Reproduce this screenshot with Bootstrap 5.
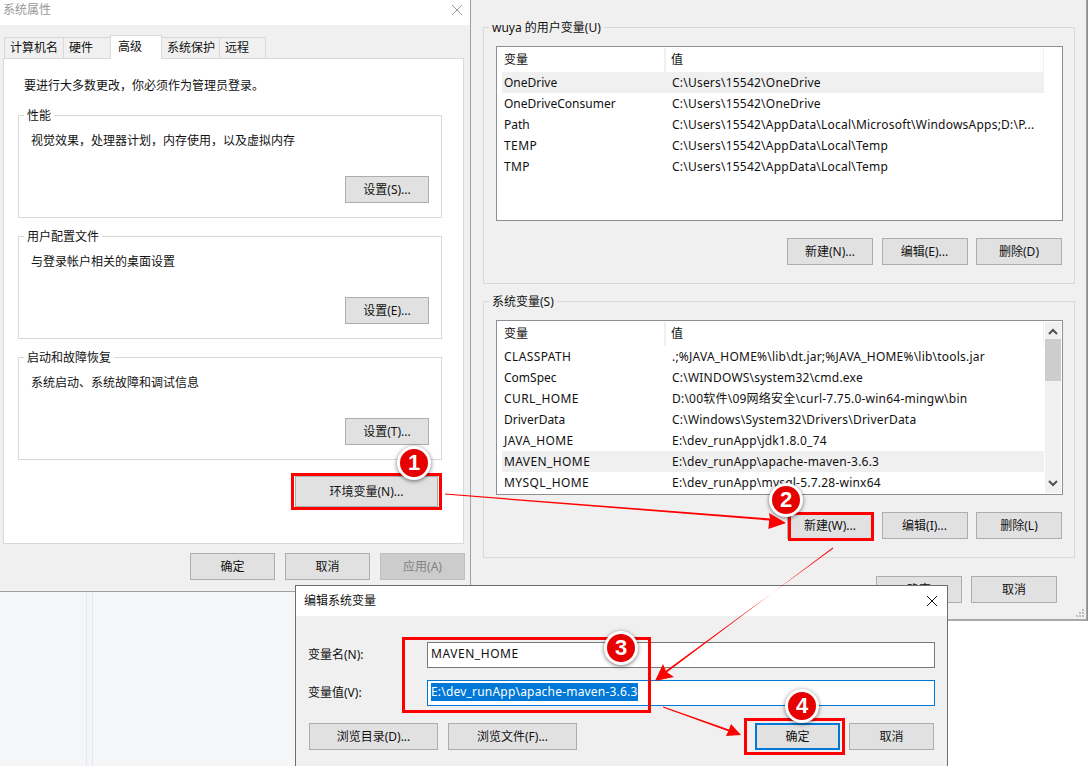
<!DOCTYPE html>
<html lang="zh-CN">
<head>
<meta charset="utf-8">
<title>环境变量</title>
<link href="https://cdn.jsdelivr.net/npm/bootstrap@5.3.0/dist/css/bootstrap.min.css" rel="stylesheet">
<style>
html,body{margin:0;height:766px;overflow:hidden;background:#fff}
body{font-family:"Noto Sans","Noto Sans CJK SC",sans-serif;font-size:12px;line-height:16px;color:#111;position:relative;width:1088px}
.backdrop{position:absolute;left:0;top:591px;width:296px;height:175px;background:#f5f6f8;display:flex}
.backdrop i{display:block;margin-left:86px;width:7px;height:100%;border-left:1px solid #e6e8eb;border-right:1px solid #e6e8eb}
.edge-strip{position:absolute;left:1087px;top:0;width:1px;height:621px;background:#8d8f92}
.win{position:absolute;background:#f0f0f0;display:flex;flex-direction:column}
.win-left{left:0;top:0;width:471px;height:592px;border-right:1px solid #a0a0a0;border-bottom:1px solid #a0a0a0}
.win-right{left:471px;top:0;width:616px;height:621px;border-right:1px solid #a0a0a0;border-bottom:2px solid #a8a8a8}
.win-dialog{left:295px;top:585px;width:653px;height:181px;border:1px solid #6e6e6e;border-bottom:0}
.title-row{height:25px;background:#fff;padding:2px 0 0 3px;color:#999;flex:none;justify-content:space-between}
.win-dialog .title-row{height:30px;padding:7px 0 0 8px;color:#111}
.x-ico{width:12px;height:12px;margin:2px 7px 0 0;stroke:#999;stroke-width:1;fill:none}
.win-dialog .x-ico{margin:2px 9px 0 0;stroke:#111}
.win-btn.btn{width:85px;height:27px;padding:0;border:1px solid #adadad;border-radius:0;background:#e1e1e1;color:#111;font-size:12px;line-height:25px;flex:none}
.win-right .win-btn.btn{width:86px}
.win-btn.btn:disabled{opacity:1;background:#cccccc;border-color:#bfbfbf;color:#838383}
.tabs-row{margin:9px 0 0 4px;height:24px;align-items:flex-end;flex:none}
.tab-item{height:21px;border:1px solid #d9d9d9;border-left-width:0;border-bottom:0;padding:2px 0 0 5px;background:#f0f0f0;flex:none}
.tab-item:first-child{border-left-width:1px}
.tab-on{height:24px;background:#fff;padding-top:3px;margin-bottom:-1px;border-left-width:1px;position:relative;margin-left:-1px;padding-left:7px;z-index:1}
.tab-pane-box{margin-left:3px;width:461px;height:486px;background:#fff;border:1px solid #d9d9d9;padding:19px 0 0 20px;flex:none}
.group-box{position:relative;border:1px solid #d9d9d9;flex:none}
.group-cap{position:absolute;left:5px;top:-8px;padding:0 3px;background:#fff}
.win-right .group-cap,.win-right .group-box{background-color:#f0f0f0}
.grp-sys{width:424px;height:103px;margin:21px 0 18px -6px;padding:17px 0 0 12px;background:#fff}
.grp-sys+.grp-sys{margin-top:0}
.grp-sys .win-btn.btn{position:absolute;right:12px;bottom:14px;width:84px}
.env-row{width:422px;margin:-2px 0 0 -6px;justify-content:flex-end}
.env-row .win-btn.btn{width:143px;height:31px;line-height:29px;margin-right:2px}
.foot-left{margin:9px 5px 0 0;gap:10px;justify-content:flex-end;padding-left:190px}
.grp-var{width:592px;height:257px;margin-left:12px;flex:none}
.grp-bot{margin-top:17px}
.list-wrap{position:absolute;left:12px;top:18px;width:567px;height:175px;background:#fff;border:1px solid #8a9098;padding:1px 0 0 5px}
.list-head{height:24px;width:542px;border-right:1px solid #f0f0f0;padding-top:4px}
.cell-a{width:164px;flex:none;padding-left:2px;white-space:nowrap}
.cell-a.caps{letter-spacing:.4px}
.cell-b{padding-left:6px;white-space:nowrap;letter-spacing:.22px}
.list-head .cell-b{border-left:2px solid #f0f0f0;margin:-4px 0 0;padding-top:4px;height:24px;padding-left:5px}
.list-line{height:21px;width:542px;line-height:21px}
.list-line.sel{background:#f0f0f0}
.scroll-col{position:absolute;right:1px;top:1px;bottom:1px;width:16px;background:#f0f0f0}
.scroll-thumb{position:absolute;left:0;top:17px;width:16px;height:42px;background:#cdcdcd}
.scroll-col svg{position:absolute;left:3px;width:10px;height:7px;fill:none;stroke:#505050;stroke-width:2}
.row-btns{position:absolute;right:12px;bottom:18px;gap:8.5px}
.foot-right{margin:18px 0 0 405px;gap:9px}
.grip-ico{position:absolute;right:2px;bottom:2px;width:8px;height:8px;fill:#bdbdbd}
.field-line{height:26px;margin:0 12px;align-items:center}
.field-line label{width:119px;flex:none}
.win-field{width:508px;height:26px;border:1px solid #7a7a7a;background:#fff;padding:0 0 1px 3px;line-height:22px}
.win-field.plain{letter-spacing:.55px}
.win-field.on{border-color:#0078d7;letter-spacing:.2px}
.win-field.on span{background:#0078d7;color:#fff;display:inline-block;line-height:18px}
.dlg-foot{margin:17px 13px 0}
.dlg-foot .win-btn.btn.wide{width:129px;margin-right:10px}
.win-btn.btn.main{border:2px solid #0078d7;line-height:23px;margin-right:9px}
.mark-box{position:absolute;border:3px solid #f00;pointer-events:none}
.mark-num{position:absolute;width:34px;height:34px;border-radius:50%;background:#e60000;border:3px solid #fff;box-shadow:0 1px 4px rgba(0,0,0,.55);color:#fff;font:700 22px/28px "Liberation Sans",sans-serif;text-align:center}
.mark-svg{position:absolute;left:0;top:0;width:1088px;height:766px;pointer-events:none}
</style>
</head>
<body>
<div class="backdrop"><i></i></div>
<div class="edge-strip"></div>

<section class="win win-left">
  <div class="title-row d-flex"><span>系统属性</span><svg class="x-ico" viewBox="0 0 12 12"><path d="M1 1l10 10M11 1L1 11"/></svg></div>
  <div class="tabs-row d-flex">
    <div class="tab-item" style="width:60px">计算机名</div>
    <div class="tab-item" style="width:47px">硬件</div>
    <div class="tab-item tab-on" style="width:52px">高级</div>
    <div class="tab-item" style="width:58px">系统保护</div>
    <div class="tab-item" style="width:46px">远程</div>
  </div>
  <div class="tab-pane-box">
    <div>要进行大多数更改，你必须作为管理员登录。</div>
    <div class="group-box grp-sys"><span class="group-cap">性能</span>视觉效果，处理器计划，内存使用，以及虚拟内存<button class="btn win-btn" type="button">设置(S)...</button></div>
    <div class="group-box grp-sys"><span class="group-cap">用户配置文件</span>与登录帐户相关的桌面设置<button class="btn win-btn" type="button">设置(E)...</button></div>
    <div class="group-box grp-sys"><span class="group-cap">启动和故障恢复</span>系统启动、系统故障和调试信息<button class="btn win-btn" type="button">设置(T)...</button></div>
    <div class="env-row d-flex"><button class="btn win-btn" type="button">环境变量(N)...</button></div>
  </div>
  <div class="foot-left d-flex">
    <button class="btn win-btn" type="button">确定</button>
    <button class="btn win-btn" type="button">取消</button>
    <button class="btn win-btn" type="button" disabled>应用(A)</button>
  </div>
</section>

<section class="win win-right">
  <div class="group-box grp-var" style="margin-top:27px"><span class="group-cap">wuya 的用户变量(U)</span>
    <div class="list-wrap">
      <div class="list-head d-flex"><div class="cell-a" style="width:162px">变量</div><div class="cell-b">值</div></div>
      <div class="list-line sel d-flex"><div class="cell-a">OneDrive</div><div class="cell-b">C:\Users\15542\OneDrive</div></div>
      <div class="list-line d-flex"><div class="cell-a">OneDriveConsumer</div><div class="cell-b">C:\Users\15542\OneDrive</div></div>
      <div class="list-line d-flex"><div class="cell-a">Path</div><div class="cell-b">C:\Users\15542\AppData\Local\Microsoft\WindowsApps;D:\P...</div></div>
      <div class="list-line d-flex"><div class="cell-a caps">TEMP</div><div class="cell-b">C:\Users\15542\AppData\Local\Temp</div></div>
      <div class="list-line d-flex"><div class="cell-a caps">TMP</div><div class="cell-b">C:\Users\15542\AppData\Local\Temp</div></div>
    </div>
    <div class="row-btns d-flex">
      <button class="btn win-btn" type="button">新建(N)...</button>
      <button class="btn win-btn" type="button">编辑(E)...</button>
      <button class="btn win-btn" type="button">删除(D)</button>
    </div>
  </div>
  <div class="group-box grp-var grp-bot"><span class="group-cap">系统变量(S)</span>
    <div class="list-wrap">
      <div class="list-head d-flex"><div class="cell-a" style="width:162px">变量</div><div class="cell-b">值</div></div>
      <div class="list-line d-flex"><div class="cell-a caps">CLASSPATH</div><div class="cell-b">.;%JAVA_HOME%\lib\dt.jar;%JAVA_HOME%\lib\tools.jar</div></div>
      <div class="list-line d-flex"><div class="cell-a">ComSpec</div><div class="cell-b">C:\WINDOWS\system32\cmd.exe</div></div>
      <div class="list-line d-flex"><div class="cell-a caps">CURL_HOME</div><div class="cell-b">D:\00软件\09网络安全\curl-7.75.0-win64-mingw\bin</div></div>
      <div class="list-line d-flex"><div class="cell-a">DriverData</div><div class="cell-b">C:\Windows\System32\Drivers\DriverData</div></div>
      <div class="list-line d-flex"><div class="cell-a caps">JAVA_HOME</div><div class="cell-b">E:\dev_runApp\jdk1.8.0_74</div></div>
      <div class="list-line sel d-flex"><div class="cell-a caps">MAVEN_HOME</div><div class="cell-b">E:\dev_runApp\apache-maven-3.6.3</div></div>
      <div class="list-line d-flex"><div class="cell-a caps">MYSQL_HOME</div><div class="cell-b">E:\dev_runApp\mysql-5.7.28-winx64</div></div>
      <div class="scroll-col">
        <svg style="top:6px" viewBox="0 0 10 7"><path d="M1 6l4-4 4 4"/></svg>
        <div class="scroll-thumb"></div>
        <svg style="bottom:6px" viewBox="0 0 10 7"><path d="M1 1l4 4 4-4"/></svg>
      </div>
    </div>
    <div class="row-btns d-flex">
      <button class="btn win-btn" type="button">新建(W)...</button>
      <button class="btn win-btn" type="button">编辑(I)...</button>
      <button class="btn win-btn" type="button">删除(L)</button>
    </div>
  </div>
  <div class="foot-right d-flex">
    <button class="btn win-btn" type="button">确定</button>
    <button class="btn win-btn" type="button">取消</button>
  </div>
  <svg class="grip-ico" viewBox="0 0 8 8"><rect x="6" y="0" width="2" height="2"/><rect x="3" y="3" width="2" height="2"/><rect x="6" y="3" width="2" height="2"/><rect x="0" y="6" width="2" height="2"/><rect x="3" y="6" width="2" height="2"/><rect x="6" y="6" width="2" height="2"/></svg>
</section>

<section class="win win-dialog">
  <div class="title-row d-flex"><span>编辑系统变量</span><svg class="x-ico" viewBox="0 0 12 12"><path d="M1 1l10 10M11 1L1 11"/></svg></div>
  <div class="field-line d-flex" style="margin-top:26px"><label>变量名(N):</label><div class="win-field plain">MAVEN_HOME</div></div>
  <div class="field-line d-flex" style="margin-top:12px"><label>变量值(V):</label><div class="win-field on"><span>E:\dev_runApp\apache-maven-3.6.3</span></div></div>
  <div class="dlg-foot d-flex">
    <button class="btn win-btn wide" type="button">浏览目录(D)...</button>
    <button class="btn win-btn wide" type="button">浏览文件(F)...</button>
    <div class="flex-grow-1"></div>
    <button class="btn win-btn main" type="button">确定</button>
    <button class="btn win-btn" type="button">取消</button>
  </div>
</section>

<svg class="mark-svg" viewBox="0 0 1088 766" fill="#f00" stroke="none">
  <path d="M445 493.6L770 518.4 769 513 786 523 768.3 529 769.2 520.5 445 494.6z"/>
  <path d="M832.7 547.6L667 672.3 674 677 655 681 663 664 665.8 670.7 833.3 548.4z"/>
  <path d="M663.3 706.5L729 729.4 731 724 741 735 726 736 728.2 731.3 662.9 707.5z"/>
</svg>
<div class="mark-box" style="left:291px;top:473px;width:151px;height:37px"></div>
<div class="mark-box" style="left:788px;top:512px;width:86px;height:29px"></div>
<div class="mark-box" style="left:402px;top:637px;width:249px;height:76px"></div>
<div class="mark-box" style="left:744px;top:718px;width:101px;height:37px"></div>
<div class="mark-num" style="left:397px;top:446px">1</div>
<div class="mark-num" style="left:769px;top:483px">2</div>
<div class="mark-num" style="left:604px;top:631px">3</div>
<div class="mark-num" style="left:785px;top:689px">4</div>
<script src="https://cdn.jsdelivr.net/npm/bootstrap@5.3.0/dist/js/bootstrap.bundle.min.js"></script>
</body>
</html>
